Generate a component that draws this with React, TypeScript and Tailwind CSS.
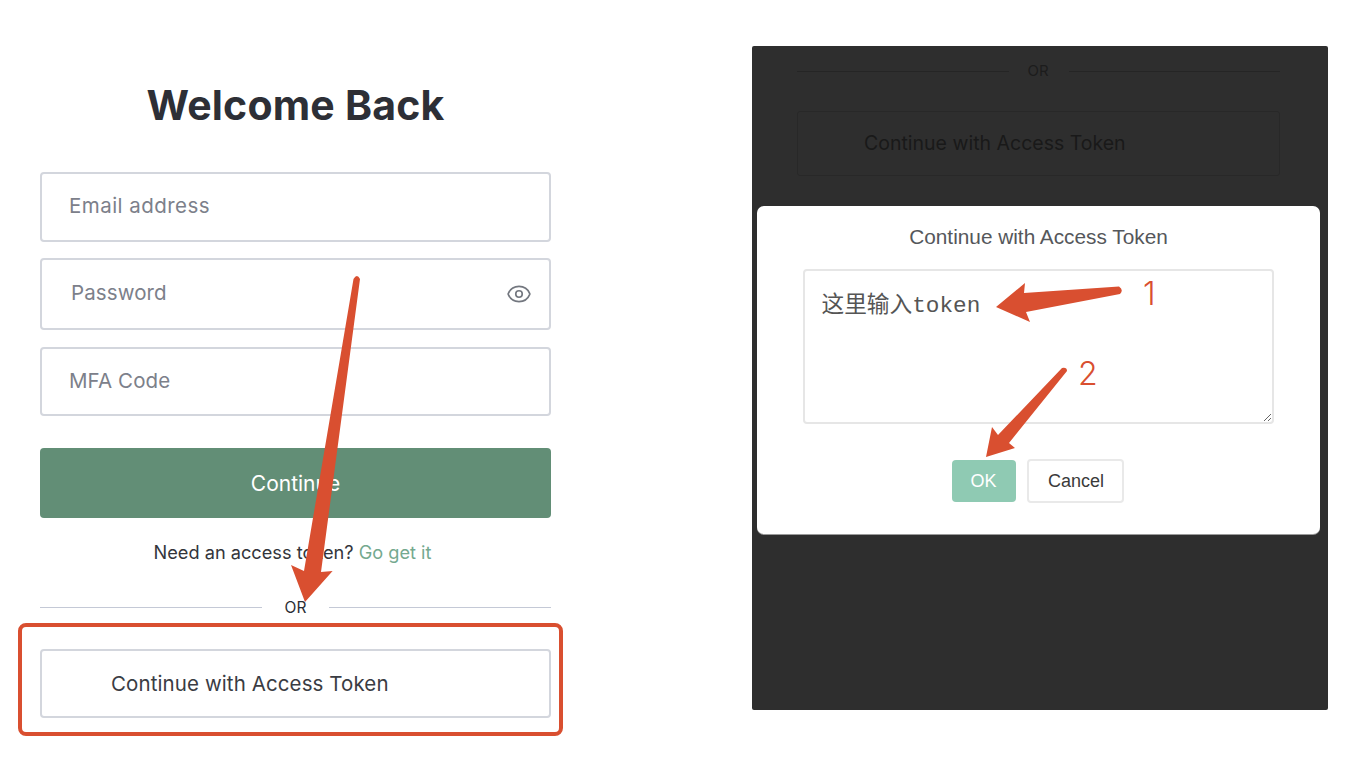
import React from 'react';
import { Eye } from 'lucide-react';

const inputBox = 'flex items-center border-2 border-[#d3d6dd] rounded-[4px] bg-white text-[#7c808a] text-[20.5px]';

const Login: React.FC = () => (
  <div className="ml-[40px] w-[511px] flex flex-col font-['Inter',sans-serif]">
    <h1 className="mt-[79px] h-[52px] leading-[52px] text-center text-[41px] font-bold text-[#2d2f36] tracking-[0.2px]">Welcome Back</h1>

    <div className={`mt-[41px] h-[70px] pl-[27px] pb-[1px] tracking-[0.45px] ${inputBox}`}>Email address</div>
    <div className={`mt-[16px] h-[72px] pl-[29px] pr-[17px] pb-[1px] tracking-[0.1px] justify-between ${inputBox}`}>
      <span>Password</span>
      <Eye className="w-[26px] h-[26px] text-[#73777f]" strokeWidth={1.5} />
    </div>
    <div className={`mt-[17px] h-[69px] pl-[27px] tracking-[0.1px] ${inputBox}`}>MFA Code</div>

    <button className="mt-[32px] h-[70px] pt-[1px] rounded-[4px] bg-[#628e76] text-white text-[21px] text-center">Continue</button>

    <p className="mt-[23px] pr-[6px] h-[22px] leading-[22px] text-center text-[18.2px] text-[#33353b]">
      Need an access token? <span className="text-[#74a98f]">Go get it</span>
    </p>

    <div className="mt-[33px] h-[22px] flex items-center">
      <div className="flex-1 h-px bg-[#c4c9d6]" />
      <span className="w-[67px] pt-[2px] text-center text-[15.5px] text-[#2b2d33]">OR</span>
      <div className="flex-1 h-px bg-[#c4c9d6]" />
    </div>

    <div className="mt-[5px] -ml-[22px] w-[545px] h-[113px] border-4 border-[#d94f30] rounded-[8px] pl-[18px] pt-[22px]">
      <div className="w-[511px] h-[69px] pt-[1px] flex items-center border-2 border-[#d3d6dd] rounded-[4px] pl-[69px] text-[20.5px] text-[#3a3c43] tracking-[0.1px]">
        Continue with Access Token
      </div>
    </div>
  </div>
);

const TokenPanel: React.FC = () => (
  <div className="ml-[201px] mt-[46px] w-[576px] h-[664px] bg-[#2e2e2e] rounded-[2px] flex flex-col pt-[16px]">
    <div className="ml-[45px] mr-[48px] h-[18px] flex items-center font-['Inter',sans-serif]">
      <div className="flex-1 h-px bg-[#252525]" />
      <span className="w-[61px] -ml-[1px] pt-[1px] text-center text-[15px] text-[#1c1c1c]">OR</span>
      <div className="flex-1 h-px bg-[#252525]" />
    </div>
    <div className="mt-[31px] ml-[45px] mr-[48px] h-[65px] flex items-center border border-[#282828] rounded-[3px] pl-[66px] text-[19.5px] text-[#191919] font-['Inter',sans-serif]">
      Continue with Access Token
    </div>

    <div className="mt-[30px] ml-[5px] w-[563px] h-[328px] bg-white rounded-[7px] shadow-[0_1px_0_#9a9a9a] flex flex-col items-center pt-[18px] font-['Liberation_Sans',sans-serif]">
      <h2 className="h-[26px] leading-[26px] text-[20.8px] text-[#55575b]">Continue with Access Token</h2>
      <textarea
        readOnly
        defaultValue="这里输入token"
        className="mt-[19px] -ml-[1px] w-[471px] h-[155px] border-2 border-[#e6e6e6] rounded-[4px] px-[17px] pt-[20px] pb-[16px] text-[22.7px] leading-[30px] text-[#555555] font-['Liberation_Mono','Noto_Sans_CJK_SC',monospace] outline-none"
      />
      <div className="mt-[35px] -ml-[2px] flex items-center gap-[11px]">
        <button className="w-[64px] h-[42px] rounded-[4px] bg-[#8fcab3] text-white text-[18px]">OK</button>
        <button className="w-[97px] h-[44px] pl-[2px] rounded-[4px] bg-white border-2 border-[#e9e9e9] text-[#3a3a3a] text-[18px]">Cancel</button>
      </div>
    </div>
  </div>
);

const App: React.FC = () => (
  <div className="relative w-[1368px] h-[762px] bg-white overflow-hidden flex items-start">
    <Login />
    <TokenPanel />

    {/* annotation arrows on top of the screenshots */}
    <svg className="absolute left-0 top-0 pointer-events-none" width="1368" height="762" viewBox="0 0 1368 762" fill="#d94f30">
      <path d="M353.5 279 Q357 273 360 279 L321 572 L332.6 571 L305 602 L291 565 L304 571 Z" />
      <path d="M1119 286.5 Q1124 290 1120 294 L1026 312 L1030 322 L996 307 L1025 283 L1024 293 Z" />
      <path d="M1062 368 Q1067 367 1067 371 L1009 443 L1015 448 L986 457 L992 427 L998 435 Z" />
    </svg>
    <span className="absolute left-[1143px] top-[275px] text-[32px] leading-[38px] font-light text-[#d94f30] font-['Inter',sans-serif]">1</span>
    <span className="absolute left-[1078px] top-[355px] text-[32px] leading-[38px] font-light text-[#d94f30] font-['Inter',sans-serif]">2</span>
  </div>
);

export default App;
